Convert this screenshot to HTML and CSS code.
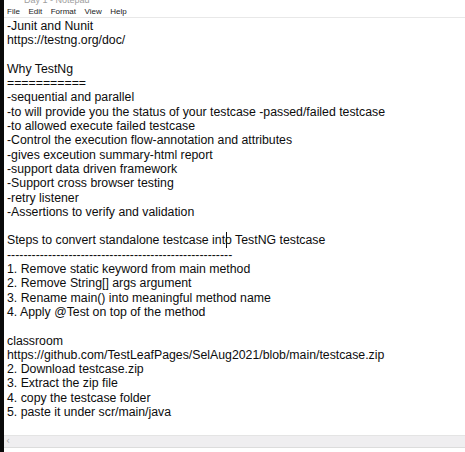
FILE: index.html
```html
<!DOCTYPE html>
<html>
<head>
<meta charset="utf-8">
<link rel="stylesheet" href="styles.css">
</head>
<body>
<div class="window">
  <div class="edge"></div>
  <div class="main">
    <div class="titlebar"><span class="title">Day 1 - Notepad</span></div>
    <div class="menubar">
      <span>File</span><span>Edit</span><span>Format</span><span>View</span><span>Help</span>
    </div>
    <div class="editor">
<pre class="text">-Junit and Nunit
<span class="url">https://testng.org/doc/</span>

Why TestNg
===========
-sequential and parallel
-to will provide you the status of your testcase -passed/failed testcase
-to allowed execute failed testcase
-Control the execution flow-annotation and attributes
-gives exceution summary-html report
-support data driven framework
-Support cross browser testing
-retry listener
-Assertions to verify and validation

<span class="cur">Steps to convert standalone testcase into TestNG testcase</span>
<span class="dashes">-------------------------------------------------------</span>
1. Remove static keyword from main method
2. Remove String[] args argument
3. Rename main() into meaningful method name
4. Apply @Test on top of the method

classroom
<span class="url">https://github.com/TestLeafPages/SelAug2021/blob/main/testcase.zip</span>
2. Download testcase.zip
3. Extract the zip file
4. copy the testcase folder
5. paste it under scr/main/java</pre>
    </div>
    <div class="hscroll"><span class="arrow">&lsaquo;</span></div>
    <div class="status"></div>
  </div>
</div>
</body>
</html>
```
FILE: styles.css
```css
html, body {
  margin: 0;
  padding: 0;
  background: #ffffff;
}
.window {
  display: flex;
  width: 465px;
  height: 452px;
  overflow: hidden;
}
.edge {
  width: 4px;
  background: #0a0a0a;
  flex: none;
}
.main {
  flex: 1;
  display: flex;
  flex-direction: column;
  min-width: 0;
}
.titlebar {
  height: 5px;
  overflow: hidden;
  padding-left: 20px;
  font: 9px "Liberation Sans", Arial, sans-serif;
  color: #a0a0a0;
  line-height: 0;
}
.title {
  display: block;
}
.menubar {
  height: 12px;
  display: flex;
  gap: 8.5px;
  padding-left: 3px;
  font: 8px "Liberation Sans", Arial, sans-serif;
  color: #1a1a1a;
  line-height: 13px;
  border-bottom: 1px solid #e8e8e8;
}
.editor {
  flex: 1;
  padding: 1px 0 0 3px;
  overflow: hidden;
}
.text {
  margin: 0;
  font: 12.3px/14.3px "Liberation Sans", Arial, sans-serif;
  color: #0d0d0d;
  white-space: pre;
}
.url {
  letter-spacing: 0;
}
.cur {
  position: relative;
}
.cur::after {
  content: "";
  position: absolute;
  left: 218.5px;
  top: -1px;
  width: 1px;
  height: 16px;
  background: #111;
}
.hscroll {
  height: 11px;
  margin-top: 1px;
  background: #efeef0;
  border-top: 1px solid #e4e4e4;
  font: 10px "DejaVu Sans", sans-serif;
  color: #b0b0b0;
  line-height: 10px;
  padding-left: 2px;
}
.status {
  height: 4px;
  border-top: 1px solid #dcdcdc;
  background: #ffffff;
}
```
